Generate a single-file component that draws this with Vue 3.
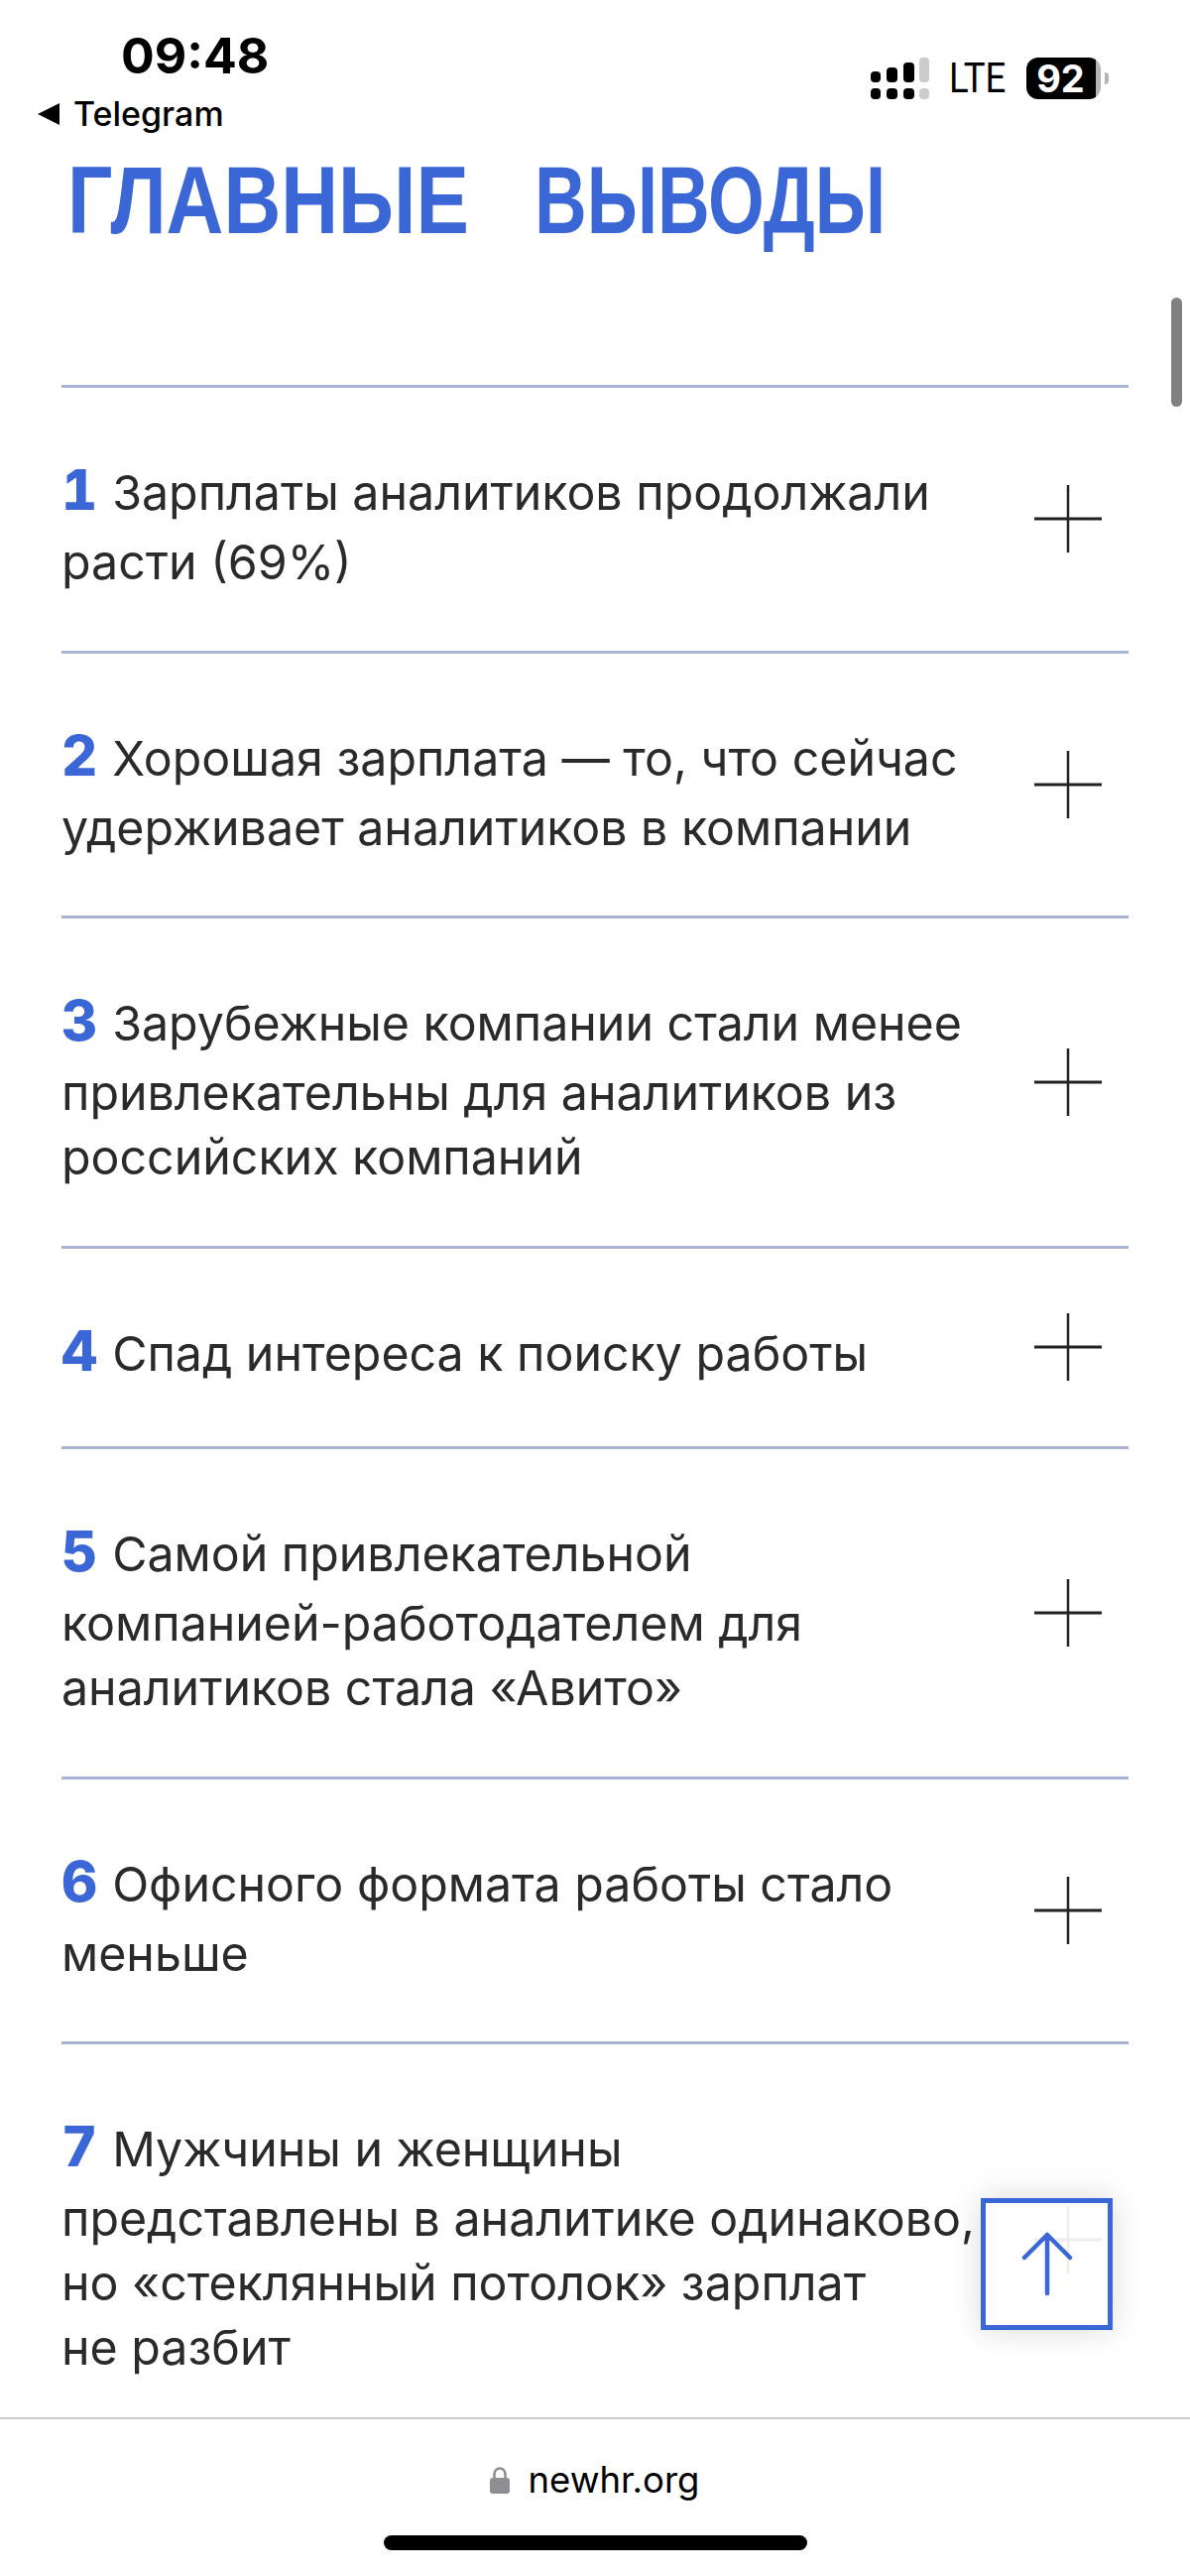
<template>
  <div class="screen">
    <header class="status">
      <div class="status-left">
        <div class="time">09:48</div>
        <div class="back">
          <span class="back-arrow"></span>
          <span>Telegram</span>
        </div>
      </div>
      <div class="status-right">
        <svg class="signal" width="60" height="42" viewBox="0 0 60 42">
          <rect x="0" y="14" width="10" height="11" rx="4" fill="#000" />
          <rect x="16" y="10" width="11" height="15" rx="4" fill="#000" />
          <rect x="33" y="5" width="11" height="20" rx="4" fill="#000" />
          <rect x="49" y="0" width="10" height="25" rx="4" fill="#ccc" />
          <rect x="0" y="31" width="10" height="11" rx="4" fill="#000" />
          <rect x="16" y="31" width="11" height="11" rx="4" fill="#000" />
          <rect x="33" y="31" width="11" height="11" rx="4" fill="#000" />
          <rect x="49" y="31" width="10" height="11" rx="4" fill="#ccc" />
        </svg>
        <span class="lte">LTE</span>
        <div class="battery">
          <span class="battery-level">92</span>
        </div>
        <span class="battery-nub"></span>
      </div>
    </header>

    <main class="content">
      <h1 class="title">
        <span class="word word-first">ГЛАВНЫЕ</span>
        <span class="word word-second">ВЫВОДЫ</span>
      </h1>
      <ul class="list">
        <li v-for="item in items" :key="item.num" class="row">
          <div class="row-text">
            <div v-for="(line, i) in item.lines" :key="i" class="line">
              <span v-if="i === 0" class="num">{{ item.num }}</span>{{ line }}
            </div>
          </div>
          <svg class="plus" width="68" height="68" viewBox="0 0 68 68">
            <path d="M34 0V68" stroke="#222" stroke-width="2.5" fill="none" />
            <path d="M0 34H68" stroke="#222" stroke-width="3" fill="none" />
          </svg>
        </li>
      </ul>
      <div class="scroll-thumb"></div>
      <button class="to-top">
        <svg width="54" height="72" viewBox="0 0 54 72">
          <path d="M27 6V65M4 29L27 6L50 29" stroke="#3a66d6" stroke-width="4.5" stroke-linecap="round" stroke-linejoin="round" fill="none" />
        </svg>
      </button>
    </main>

    <footer class="bar">
      <div class="url">
        <svg width="20" height="28" viewBox="0 0 20 28">
          <path d="M4.5 13V8a5.5 5.5 0 0 1 11 0v5" stroke="#8e8e93" stroke-width="2.6" fill="none" />
          <rect x="0" y="12" width="20" height="16" rx="3" fill="#8e8e93" />
        </svg>
        <span>newhr.org</span>
      </div>
      <div class="home"></div>
    </footer>
  </div>
</template>

<script setup>
const items = [
  { num: 1, lines: ['Зарплаты аналитиков продолжали', 'расти (69%)'] },
  { num: 2, lines: ['Хорошая зарплата — то, что сейчас', 'удерживает аналитиков в компании'] },
  { num: 3, lines: ['Зарубежные компании стали менее', 'привлекательны для аналитиков из', 'российских компаний'] },
  { num: 4, lines: ['Спад интереса к поиску работы'] },
  { num: 5, lines: ['Самой привлекательной', 'компанией-работодателем для', 'аналитиков стала «Авито»'] },
  { num: 6, lines: ['Офисного формата работы стало', 'меньше'] },
  { num: 7, lines: ['Мужчины и женщины', 'представлены в аналитике одинаково,', 'но «стеклянный потолок» зарплат', 'не разбит'] }
]
</script>

<style>
html, body {
  background: #fff;
}
</style>

<style scoped>
.screen {
  width: 1200px;
  height: 2597px;
  display: flex;
  flex-direction: column;
  overflow: hidden;
  background: #fff;
  font-family: Inter, "Liberation Sans", sans-serif;
  color: #000;
}

.status {
  height: 140px;
  flex: none;
  display: flex;
  justify-content: space-between;
  padding: 0 82px 0 38px;
}

.time {
  margin: 28px 0 0 84px;
  font-size: 50px;
  line-height: 56px;
  font-weight: 700;
}

.back {
  margin-top: 11px;
  display: flex;
  align-items: center;
  gap: 14px;
  font-size: 34px;
  line-height: 40px;
  font-weight: 500;
}

.back-arrow {
  width: 0;
  height: 0;
  border-top: 11px solid transparent;
  border-bottom: 11px solid transparent;
  border-right: 22px solid #000;
}

.status-right {
  display: flex;
  align-items: center;
  height: 42px;
  margin-top: 58px;
}

.signal {
  margin-right: 19px;
}

.lte {
  width: 58px;
  font-family: Roboto, "Liberation Sans", sans-serif;
  font-size: 42px;
  line-height: 42px;
  margin-right: 20px;
  transform: scaleX(0.87);
  transform-origin: left center;
}

.battery {
  width: 75px;
  height: 42px;
  box-sizing: border-box;
  padding-right: 6px;
  border-radius: 12px;
  background: linear-gradient(to right, #000 70px, #b4b4b4 70px);
  color: #fff;
  font-size: 38px;
  line-height: 42px;
  font-weight: 700;
  text-align: center;
}

.battery-level {
  display: block;
}

.battery-nub {
  width: 4px;
  height: 12px;
  margin-left: 4px;
  background: #b4b4b4;
  border-radius: 0 6px 6px 0;
}

.content {
  flex: 1;
  position: relative;
  overflow: hidden;
}

.title {
  margin: 0;
  padding-left: 68px;
  height: 248px;
  box-sizing: border-box;
  display: flex;
  gap: 74px;
  font-family: "Liberation Sans", sans-serif;
  font-size: 96px;
  line-height: 124px;
  font-weight: 700;
  color: #3a66d6;
  white-space: nowrap;
}

.word {
  display: block;
  transform-origin: left center;
}

/* no condensed font here, so the two words are squeezed to width */
.word-first {
  width: 397px;
  transform: scaleX(0.834);
}

.word-second {
  width: 344px;
  transform: scaleX(0.76);
}

.list {
  list-style: none;
  margin: 0 62px;
  padding: 0;
  border-top: 3px solid #a8b3d4;
}

.row {
  display: flex;
  justify-content: space-between;
  align-items: center;
  padding: 61px 27px 61.5px 0;
  border-bottom: 3px solid #a8b3d4;
}

.row:last-child {
  border-bottom: none;
}

.row-text {
  margin: 5px 0 -5px;
}

.line {
  font-size: 48.3px;
  line-height: 65px;
  color: #2a2a2a;
  white-space: nowrap;
}

.line:first-child {
  line-height: 74px;
}

.num {
  margin-right: 15px;
  font-size: 56px;
  font-weight: 800;
  font-feature-settings: "tnum";
  color: #3a66d6;
}

.plus {
  flex: none;
}

.scroll-thumb {
  position: absolute;
  top: 160px;
  left: 1181px;
  width: 11px;
  height: 110px;
  border-radius: 6px;
  background: #808080;
}

.to-top {
  position: absolute;
  left: 989px;
  top: 2076px;
  width: 133px;
  height: 133px;
  box-sizing: border-box;
  padding: 0;
  display: flex;
  align-items: center;
  justify-content: center;
  background: rgba(255, 255, 255, 0.92);
  border: 5px solid #3a66d6;
  box-shadow: 0 0 30px rgba(0, 0, 0, 0.15);
}

.bar {
  flex: none;
  height: 160px;
  box-sizing: border-box;
  border-top: 2px solid #ccc;
  background: #fff;
  display: flex;
  flex-direction: column;
  align-items: center;
}

.url {
  margin-top: 39px;
  display: flex;
  align-items: center;
  gap: 18px;
  font-size: 36.5px;
  line-height: 44px;
}

.home {
  margin-top: 34px;
  width: 427px;
  height: 15px;
  border-radius: 8px;
  background: #000;
}
</style>
